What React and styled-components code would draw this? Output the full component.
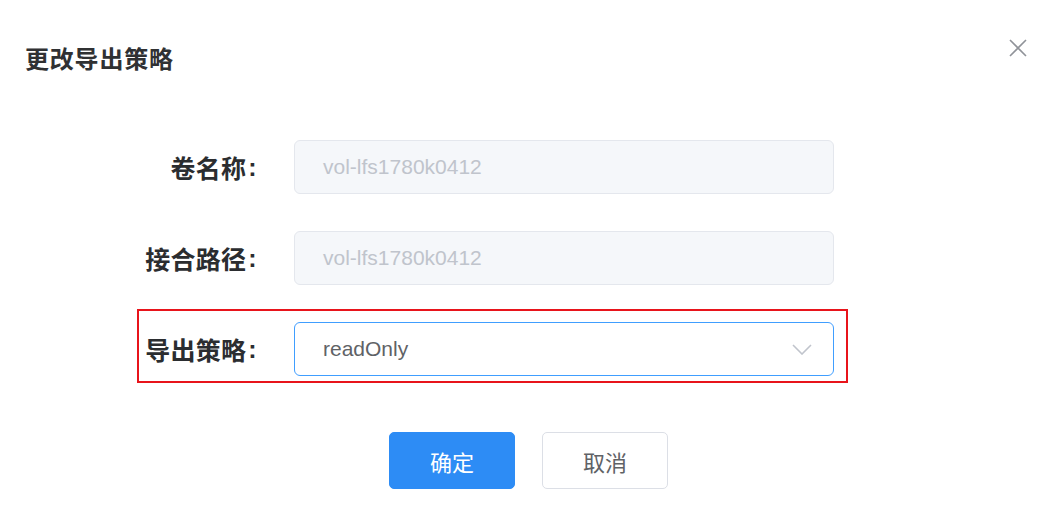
import React from "react";
import styled, { createGlobalStyle } from "styled-components";

const GlobalStyle = createGlobalStyle`
  html, body { margin: 0; padding: 0; background: #ffffff; }
  body {
    font-family: "Liberation Sans", Arial, "Noto Sans CJK SC", sans-serif;
    color: #303133;
  }
  * { box-sizing: border-box; }
`;

const Dialog = styled.div`
  width: 1057px;
  height: 515px;
  background: #ffffff;
  display: flex;
  flex-direction: column;
`;

const Header = styled.div`
  height: 127px;
  display: flex;
  justify-content: space-between;
  align-items: flex-start;
  padding: 39px 30px 0 25px;
`;

const Title = styled.h2`
  margin: 6px 0 0 0;
  font-family: "Noto Sans CJK SC", sans-serif;
  font-size: 24px;
  line-height: 26px;
  font-weight: 700;
  color: #303133;
  letter-spacing: 0.8px;
`;

const CloseButton = styled.button`
  width: 18px;
  height: 18px;
  padding: 0;
  border: none;
  background: transparent;
  cursor: pointer;
  display: flex;
  align-items: center;
  justify-content: center;
  color: #909399;
`;

const Form = styled.div`
  display: flex;
  flex-direction: column;
  gap: 17px;
  padding-left: 137px;
`;

const Row = styled.div`
  width: 711px;
  height: 74px;
  display: flex;
  align-items: flex-start;
  padding-top: 11px;
  border: 2px solid ${(p) => (p.$highlighted ? "#e8141b" : "transparent")};
`;

const Label = styled.label`
  width: 118px;
  margin-right: 37px;
  height: 54px;
  display: flex;
  align-items: center;
  justify-content: flex-end;
  font-family: "Noto Sans CJK SC", sans-serif;
  font-size: 25px;
  font-weight: 700;
  color: #2b2d30;
  letter-spacing: 0.3px;
  white-space: nowrap;
`;

const Colon = styled.span`
  font-family: "Liberation Sans", sans-serif;
  margin-left: 2px;
`;

const Field = styled.div`
  width: 540px;
  height: 54px;
  border-radius: 6px;
  border: 1px solid ${(p) => (p.$disabled ? "#e4e7ed" : "#409eff")};
  background: ${(p) => (p.$disabled ? "#f5f7fa" : "#ffffff")};
  display: flex;
  align-items: center;
  justify-content: space-between;
  padding: 0 21px 0 28px;
  font-family: "Liberation Sans", Arial, sans-serif;
  font-size: 21px;
  color: ${(p) => (p.$disabled ? "#c0c4cc" : "#606266")};
`;

const Chevron = styled.svg`
  width: 20px;
  height: 11px;
  display: block;
`;

const Footer = styled.div`
  display: flex;
  justify-content: center;
  gap: 27px;
  margin-top: 49px;
`;

const Button = styled.button`
  width: 126px;
  height: 57px;
  border-radius: 5px;
  font-family: "Noto Sans CJK SC", sans-serif;
  font-size: 22px;
  cursor: pointer;
  border: 1px solid ${(p) => (p.$primary ? "#2d8cf5" : "#dcdfe6")};
  background: ${(p) => (p.$primary ? "#2d8cf5" : "#ffffff")};
  color: ${(p) => (p.$primary ? "#ffffff" : "#606266")};
`;

const rows = [
  { label: "卷名称", value: "vol-lfs1780k0412", disabled: true },
  { label: "接合路径", value: "vol-lfs1780k0412", disabled: true },
  { label: "导出策略", value: "readOnly", disabled: false, select: true },
];

export default function App() {
  return (
    <>
      <GlobalStyle />
      <Dialog>
        <Header>
          <Title>更改导出策略</Title>
          <CloseButton aria-label="close">
            <svg width="18" height="18" viewBox="0 0 18 18">
              <path d="M1 1L17 17M17 1L1 17" stroke="#909399" strokeWidth="1.6" fill="none" />
            </svg>
          </CloseButton>
        </Header>
        <Form>
          {rows.map((r) => (
            <Row key={r.label} $highlighted={r.select}>
              <Label>
                {r.label}
                <Colon>:</Colon>
              </Label>
              <Field $disabled={r.disabled}>
                <span>{r.value}</span>
                {r.select && (
                  <Chevron viewBox="0 0 20 11">
                    <path d="M1 1L10 10L19 1" stroke="#c0c4cc" strokeWidth="1.6" fill="none" />
                  </Chevron>
                )}
              </Field>
            </Row>
          ))}
        </Form>
        <Footer>
          <Button $primary>确定</Button>
          <Button>取消</Button>
        </Footer>
      </Dialog>
    </>
  );
}
